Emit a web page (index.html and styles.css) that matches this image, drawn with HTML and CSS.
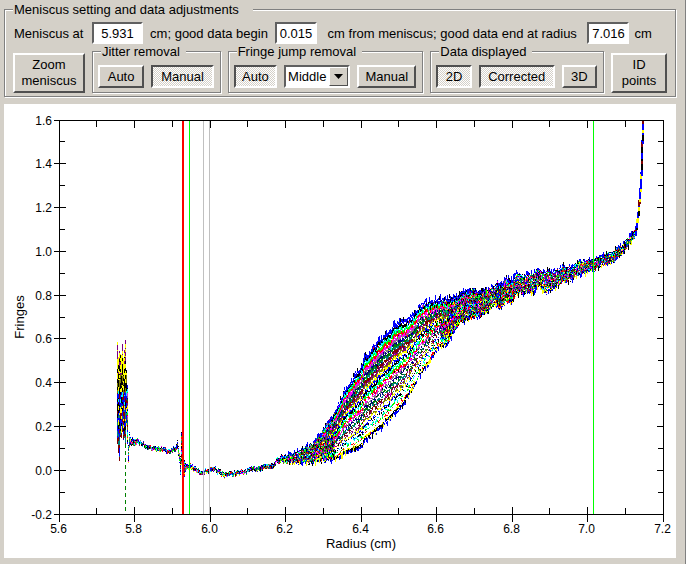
FILE: index.html
```
<!DOCTYPE html>
<html lang="en">
<head>
<meta charset="utf-8">
<title>Meniscus setting and data adjustments</title>
<link rel="stylesheet" href="styles.css">
</head>
<body>
<main>
<fieldset class="group settings">
  <legend>Meniscus setting and data adjustments</legend>
  <div class="values">
    <label for="meniscus">Meniscus at</label>
    <input id="meniscus" type="text" value="5.931">
    <label for="begin">cm; good data begin</label>
    <input id="begin" type="text" value="0.015">
    <label for="end">cm from meniscus; good data end at radius</label>
    <input id="end" type="text" value="7.016">
    <span class="unit">cm</span>
  </div>
  <div class="tools">
    <button type="button" class="tall zoom">Zoom<br>meniscus</button>
    <fieldset class="group jitter">
      <legend>Jitter removal</legend>
      <div class="options">
        <button type="button">Auto</button>
        <button type="button" aria-pressed="true">Manual</button>
      </div>
    </fieldset>
    <fieldset class="group fringe">
      <legend>Fringe jump removal</legend>
      <div class="options">
        <button type="button" aria-pressed="true">Auto</button>
        <div class="picker">
          <select aria-label="Fringe jump position"><option>Middle</option></select>
          <span class="arrow"><svg width="9" height="5" viewBox="0 0 9 5"><path d="M0 0h9L4.5 5z"/></svg></span>
        </div>
        <button type="button">Manual</button>
      </div>
    </fieldset>
    <fieldset class="group displayed">
      <legend>Data displayed</legend>
      <div class="options">
        <button type="button" aria-pressed="true">2D</button>
        <button type="button" aria-pressed="true">Corrected</button>
        <button type="button">3D</button>
      </div>
    </fieldset>
    <button type="button" class="tall points">ID<br>points</button>
  </div>
</fieldset>
<section class="chart">
  <svg id="plot" viewBox="4 104 672 454" role="img" aria-label="Fringes against radius"></svg>
</section>
</main>
<script src="plot.js"></script>
</body>
</html>
```
FILE: styles.css
```
* { box-sizing: border-box; }
body {
  margin: 0;
  min-height: 100vh;
  padding: 2px 9px 6px 4px;
  border-right: 1px solid #808080;
  background: #d4d0c8;
  color: #000;
  font: 13px/15px "Liberation Sans", Arial, sans-serif;
}
.group {
  min-width: 0;
  margin: 0;
  border: 1px solid #808080;
  box-shadow: 1px 1px 0 #fff, inset 1px 1px 0 #fff;
}
legend {
  margin: 0;
  padding: 0 6px 0 1px;
  background: #d4d0c8;
  white-space: nowrap;
}
.settings { padding: 5px 8px 3px; }
.settings > legend { padding-right: 14px; }
.values {
  display: grid;
  grid-template-columns: 75px 51px minmax(124px, 125fr) 42px minmax(260px, 266fr) 42px minmax(32px, 34fr);
  align-items: center;
  gap: 4px;
  text-align: center;
  white-space: nowrap;
}
.values label:first-child, .unit { padding-left: 1px; text-align: left; }
input, button, select {
  margin: 0;
  border-radius: 0;
  font: inherit;
  color: inherit;
}
input {
  width: 100%;
  height: 22px;
  padding: 0;
  border: 2px solid;
  border-color: #606060 #fff #fff #606060;
  background: #fff;
  text-align: center;
}
.tools {
  display: flex;
  align-items: flex-end;
  gap: 7px;
}
.tools > * { flex: 1 1 auto; }
.zoom { width: 72px; }
.jitter { width: 129px; }
.fringe { width: 196px; }
.displayed { width: 174px; }
.points { width: 56px; }
.tools .group { padding: 6px 6px 4px 5px; }
.tools legend { margin-left: 3px; }
.options { display: flex; gap: 7px; }
.options > * { flex: 1 1 auto; }
button {
  height: 23px;
  padding: 0;
  border: 2px solid;
  border-color: #fff #505050 #505050 #fff;
  background: #d4d0c8;
}
button[aria-pressed="true"] {
  border-color: #505050 #fff #fff #505050;
  background: repeating-conic-gradient(#d4d0c8 0 25%, #fff 0 50%) 0 0 / 2px 2px;
}
.tall { height: 40px; line-height: 16px; }
.picker { position: relative; flex: 0 0 66px; }
select {
  appearance: none;
  width: 100%;
  height: 23px;
  padding: 0 0 0 2px;
  border: 2px solid;
  border-color: #606060 #fff #fff #606060;
  background: #fff;
}
.arrow {
  position: absolute;
  top: 2px;
  right: 2px;
  bottom: 2px;
  width: 19px;
  display: grid;
  place-items: center;
  border: 1px solid;
  border-color: #fff #505050 #505050 #fff;
  background: #d4d0c8;
  pointer-events: none;
}
.chart { margin-top: 7px; background: #fff; }
.chart svg { display: block; width: 100%; }
.chart text { font-size: 12px; fill: #000; }
.chart .title { font-size: 13px; }
.axis, .trace { fill: none; stroke: #000; shape-rendering: crispEdges; }
```
FILE: plot.js
```
const plot = document.getElementById('plot');
const X0 = 59.5, X1 = 663.5, Y0 = 514.5, Y1 = 120.5;

function add(name, attrs, text) {
  const el = document.createElementNS('http://www.w3.org/2000/svg', name);
  for (const key in attrs) el.setAttribute(key, attrs[key]);
  if (text) el.textContent = text;
  plot.appendChild(el);
}

let seed = 7;
function rnd() {
  seed = (seed * 16807) % 2147483647;
  return seed / 2147483647;
}

// Envelope of the scans: x, top, bottom
const envelope = [
  [127, 384, 440], [128, 446, 462], [129, 434, 448], [131, 440, 444], [133, 439, 444], [140, 442, 443],
  [150, 447, 448], [160, 448, 449], [170, 450, 451], [175, 448, 450],
  [177, 440, 446], [179, 454, 462], [180, 457, 473], [181, 433, 464],
  [182, 437, 475], [183, 450, 468], [184, 461, 475], [186, 465, 467], [190, 465, 467],
  [199, 471, 472], [207, 470, 471], [215, 469, 470], [223, 473, 475], [240, 472, 473],
  [250, 469, 470], [260, 466, 468], [273, 464, 466], [276, 459, 461], [284, 455, 461], [290, 455, 462],
  [300, 450, 461], [313, 443, 462], [320, 434, 459], [326, 423, 459], [333, 415, 458],
  [344, 391, 453], [352, 379, 449], [358, 370, 447], [362, 365, 445], [364, 356, 439], [368, 353, 436],
  [377, 343, 430], [380, 338, 427], [390, 332, 418], [394, 325, 413], [400, 321, 407],
  [410, 318, 391], [420, 306, 374], [427, 302, 364], [437, 300, 346], [448, 299, 342], [452, 298, 332],
  [460, 293, 320], [470, 290, 317], [480, 290, 314], [490, 288, 308],
  [494, 288, 303], [497, 281, 304], [500, 284, 307], [505, 278, 301], [512, 280, 301],
  [516, 275, 294], [525, 276, 292], [532, 275, 292], [537, 269, 284], [544, 272, 291],
  [553, 272, 288], [562, 267, 281], [570, 267, 279], [582, 261, 272], [593, 261, 269],
  [602, 256, 264], [610, 253, 262], [622, 246, 253], [630, 236, 242],
  [634, 230, 235], [637, 219, 223], [639, 202, 206], [641, 178, 182],
  [642, 148, 152], [643, 121, 124]
];
function bounds(x) {
  let k = 1;
  while (k < envelope.length - 1 && envelope[k][0] < x) k++;
  const a = envelope[k - 1], b = envelope[k], t = (x - a[0]) / (b[0] - a[0]);
  return [a[1] + (b[1] - a[1]) * t, a[2] + (b[2] - a[2]) * t];
}

const colors = ['#00f', '#000', '#0ff', '#0f0', '#f00', '#f0f', '#808080', '#000080',
  '#008000', '#008080', '#800000', '#800080', '#808000', '#ff0', '#000', '#00f'];
const common = [];
for (let x = 0; x <= 700; x++) common.push((rnd() - 0.5) * 4);

// Optical noise left of the cell's air gap
const bands = [
  [346, 353, ['#800080', '#ff0', '#ff0']],
  [353, 374, ['#ff0', '#ff0', '#ff0', '#800080', '#000']],
  [374, 391, ['#000', '#000', '#000', '#ff0', '#808000']],
  [391, 405, ['#000', '#00f', '#800000', '#00f', '#0ff']],
  [405, 430, ['#00f', '#00f', '#008080', '#800000', '#ff0', '#000']],
  [430, 440, ['#800000', '#008080', '#800000', '#008080', '#00f']]
];
for (let x = 117; x < 127; x++) {
  const top = [342, 357, 351, 354, 355, 344, 358, 350, 340, 370][x - 117];
  const end = [444, 453, 461, 437, 438, 432, 440, 438, 444, 426][x - 117];
  for (let y = top; y < end; ) {
    const band = bands.find(b => y < b[1]) || bands[5];
    const h = 1 + Math.floor(rnd() * 4);
    add('rect', { x, y, width: 1, height: Math.min(h, end - y), fill: band[2][Math.floor(rnd() * band[2].length)], 'shape-rendering': 'crispEdges' });
    y += h;
  }
}

const SCANS = 36;
for (let i = SCANS - 1; i >= 0; i--) {
  const color = i === SCANS - 1 ? '#00f' : i === SCANS - 2 ? '#000' : i === SCANS - 3 ? '#ff0' : colors[i % 14];
  const share = i / (SCANS - 1);
  let d = '';
  for (let x = 127; x <= 643; x++) {
    const [top, bottom] = bounds(x);
    const spread = bottom - top;
    const noise = x > 636 ? 0.6 : x > 400 ? 4 : spread > 35 ? 2 : 3;
    const y = Math.max(121, Math.round(top + spread * share + (x > 636 ? 0 : common[x] * 0.7) + (rnd() - 0.5) * noise));
    const tall = spread > 20 && rnd() < 1 - share * 0.7 ? 3 : spread > 20 ? 2 : 1;
    d += `M${x + 0.5} ${y}v${tall}`;
  }
  add('path', { d, class: 'trace', style: 'stroke:' + color });
}
for (let x = 128; x < 643; x++) {
  const [top, bottom] = bounds(x);
  const spread = bottom - top;
  const low = x < 636 ? common[x] * 0.7 : 0;
  const dots = spread > 45 ? 3 : 2 + spread / 4;
  for (let n = 0; n < dots; n++) {
    add('rect', {
      x, y: Math.max(121, Math.round(top + low + rnd() * spread)), width: 1, height: 1 + Math.floor(rnd() * 2),
      fill: colors[Math.floor(rnd() * colors.length)], 'shape-rendering': 'crispEdges'
    });
  }
  // occasional spikes on both edges of the scans
  if (x > 285 && x < 632 && rnd() < 0.5) {
    const h = 1 + Math.floor(rnd() * 4);
    add('rect', { x, y: Math.round(top + low) - h, width: 1, height: h, fill: rnd() < 0.7 ? '#00f' : '#000', 'shape-rendering': 'crispEdges' });
  }
  if (x > 285 && x < 632 && rnd() < 0.4) {
    const h = 2 + Math.floor(rnd() * 4);
    add('rect', { x, y: Math.round(bottom + low), width: 1, height: h, fill: ['#00f', '#00f', '#000', '#ff0'][Math.floor(rnd() * 4)], 'shape-rendering': 'crispEdges' });
  }
  // pale specks between the later, widely spaced scans
  if (spread > 45) {
    for (let n = 0; n < spread / 6; n++) {
      add('rect', { x, y: Math.round(top + spread * (1 - 0.85 * rnd() * rnd() - 0.05)), width: 1, height: 1 + Math.floor(rnd() * 2), fill: '#fff', 'shape-rendering': 'crispEdges' });
    }
  }
}
// The steep rise at the cell base
const rise = [[634, 232], [636, 226], [637, 219], [638, 212], [639, 200], [640, 188], [641, 172], [642, 140], [643, 121]];
for (let k = 1; k < rise.length; k++) {
  const [x, top] = rise[k], end = rise[k - 1][1] + 4;
  for (let y = top; y < end; ) {
    const h = Math.min(1 + Math.floor(rnd() * 6), end - y);
    add('rect', { x: x - 1, y, width: 2, height: h, fill: ['#00f', '#00f', '#000', '#800000', '#ff0', '#00f'][Math.floor(rnd() * 6)], 'shape-rendering': 'crispEdges' });
    y += h;
  }
}

// Frame, ticks and tick labels
let ticks = `M${X0} ${Y1}H${X1}V${Y0}H${X0}z`;
for (let k = 0; k <= 16; k++) {
  const x = Math.floor(X0 + k * (X1 - X0) / 16 - 0.5) + 0.5, major = k % 2 === 0;
  ticks += `M${x} 120v${major ? 8 : 7}M${x} ${major ? 507 : 508}V${major ? 522 : 514}`;
  if (major) add('text', { x: x - 1, y: 533, 'text-anchor': 'middle' }, (5.6 + k / 10).toFixed(1));
}
for (let k = 0; k <= 18; k++) {
  const y = Math.floor(Y1 + k * (Y0 - Y1) / 18 - 0.5) + 0.5, major = k % 2 === 0;
  ticks += `M${major ? 54 : 59} ${y}H${major ? 66 : 65}M${major ? 657 : 658} ${y}H663`;
  if (major) add('text', { x: 52, y: y + 4, 'text-anchor': 'end' }, (1.6 - k / 10).toFixed(1));
}
add('path', { d: ticks, class: 'axis' });
add('text', { x: 361, y: 548, 'text-anchor': 'middle', class: 'title' }, 'Radius (cm)');
add('text', { transform: 'translate(24 317) rotate(-90)', 'text-anchor': 'middle', class: 'title' }, 'Fringes');

// Radius markers
[[189, '#0f0', 1], [203, '#c0c0c0', 1], [209, '#c0c0c0', 1], [593, '#0f0', 1], [182, '#f00', 2]].forEach(([x, fill, width]) => {
  add('rect', { x, y: 121, width, height: 393, fill, 'shape-rendering': 'crispEdges' });
});
add('path', { d: 'M125.5 444V514', class: 'axis', style: 'stroke:#008000', 'stroke-dasharray': '4 3' });
```
